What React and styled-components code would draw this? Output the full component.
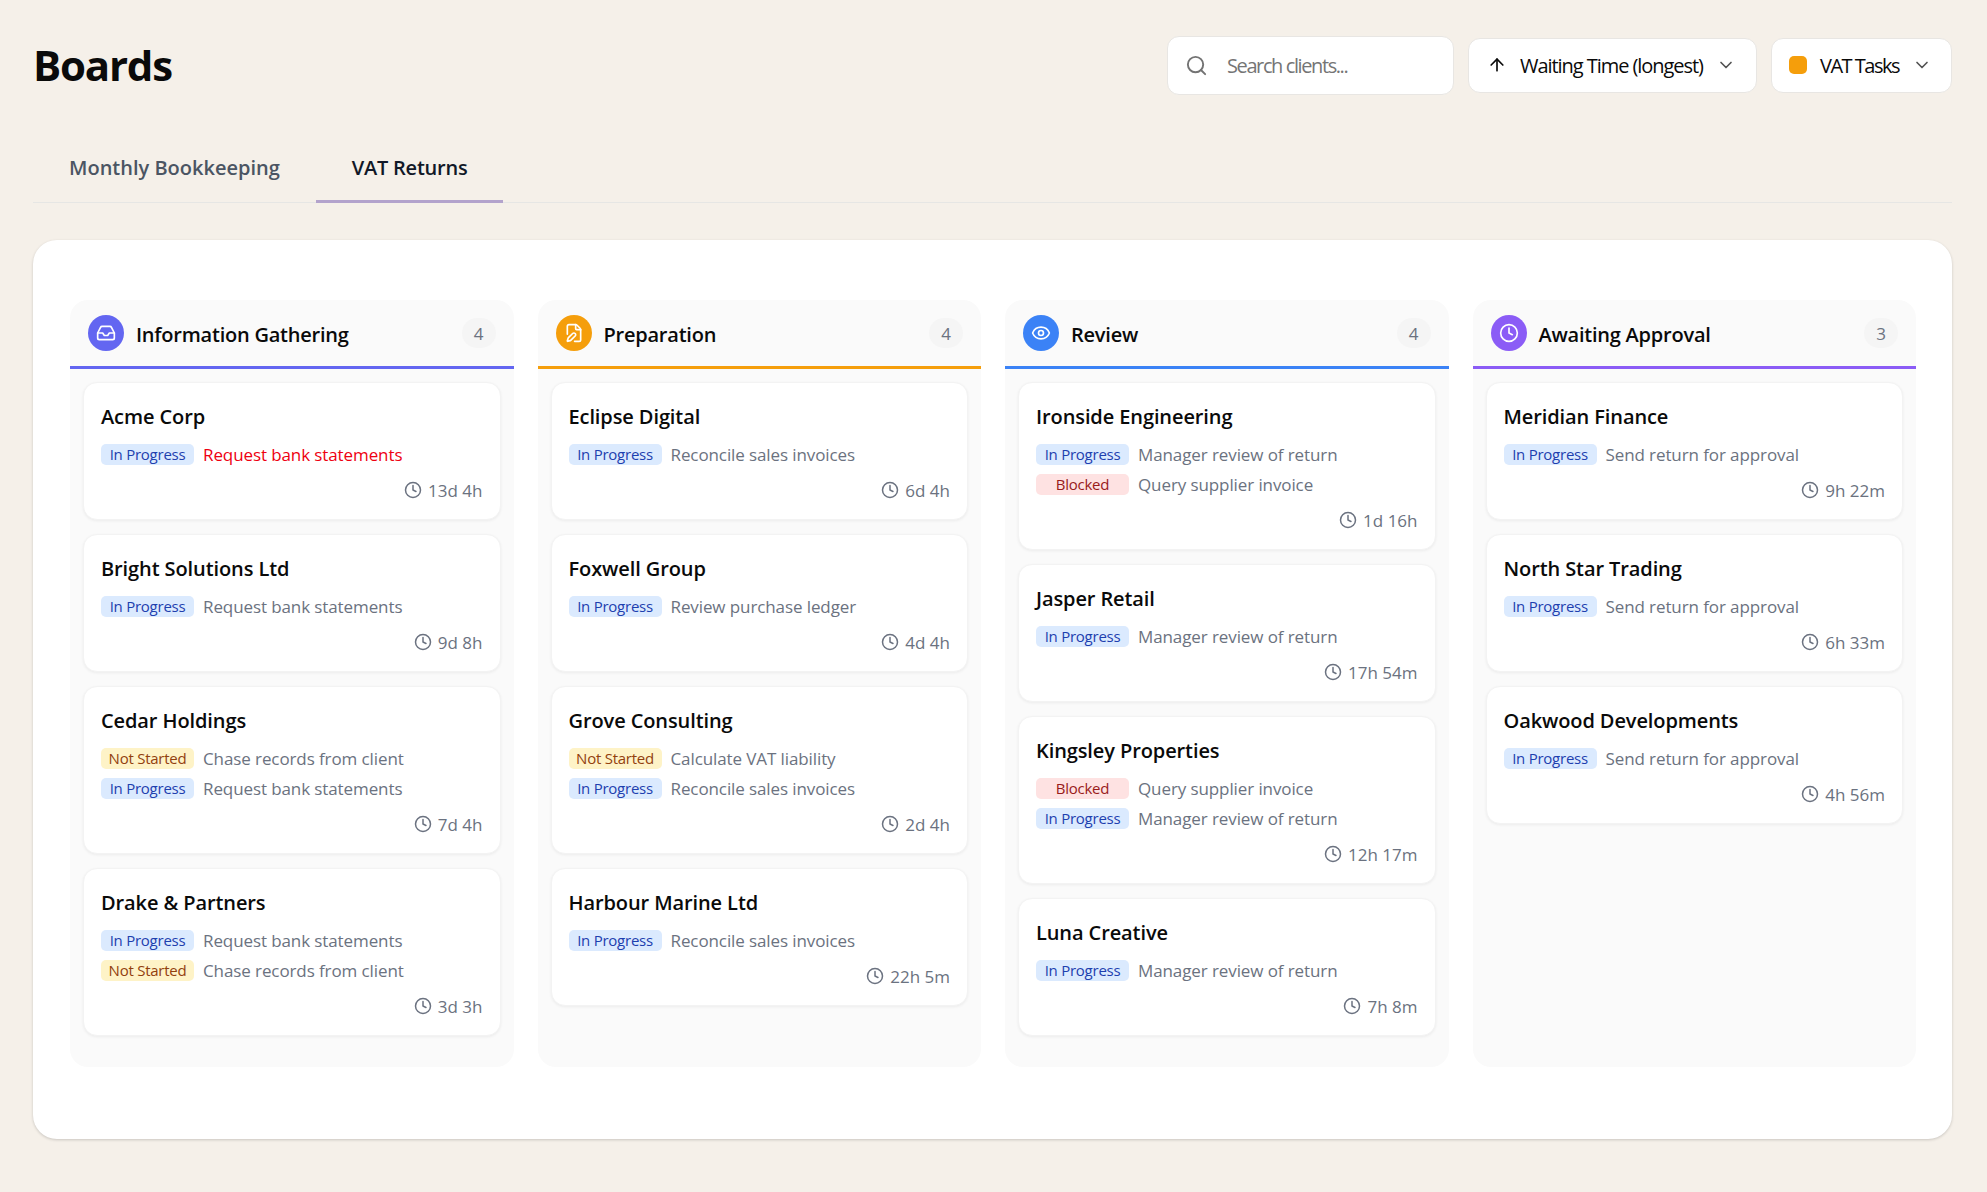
import React from 'react';
import styled, { createGlobalStyle } from 'styled-components';
import { Search, ArrowUp, ChevronDown, Inbox, FilePen, Eye, Clock } from 'lucide-react';

const Global = createGlobalStyle`
  * { box-sizing: border-box; }
  html, body { margin: 0; padding: 0; }
  body { background: #f5f0e9; font-family: "Open Sans", "Noto Sans", sans-serif; color: #0a0a0a; min-height: 1192px; }
`;

const Page = styled.div`
  padding: 35px 35px 53px 33px;
`;
const TopBar = styled.header`
  display: flex;
  align-items: center;
  justify-content: space-between;
  height: 60px;
  margin-bottom: 40px;
`;
const Title = styled.h1`
  margin: 0;
  font-size: 42px;
  font-weight: 700;
  letter-spacing: -1.2px;
  line-height: 60px;
`;
const Controls = styled.div`
  display: flex;
  align-items: center;
  gap: 14px;
`;
const Field = styled.div`
  display: flex;
  align-items: center;
  background: #fff;
  border: 1px solid #e8e6e3;
  border-radius: 12px;
  height: ${p => p.$h}px;
  width: ${p => p.$w}px;
  padding-left: ${p => p.$pad}px;
  font-size: 20px;
`;
const Placeholder = styled.span`
  color: #757575;
  margin-left: 19px;
  padding-top: 1px;
  letter-spacing: -1.4px;
`;
const SelectText = styled.span`
  margin: 0 13px;
  padding-top: 1px;
  white-space: nowrap;
  letter-spacing: ${p => p.$spacing}px;
`;
const Swatch = styled.span`
  width: 18px;
  height: 18px;
  border-radius: 5px;
  background: #f59e0b;
  flex: none;
`;
const Tabs = styled.nav`
  display: flex;
  height: 68px;
  border-bottom: 1px solid #e6e6e4;
  margin-bottom: 37px;
`;
const Tab = styled.div`
  display: flex;
  align-items: center;
  justify-content: center;
  padding: 0 36px;
  height: 68px;
  font-size: 20px;
  font-weight: 550;
  letter-spacing: ${p => (p.$active ? '-0.23px' : '0')};
  color: ${p => (p.$active ? '#111827' : '#4b5563')};
  border-bottom: 3px solid ${p => (p.$active ? '#b3a3cc' : 'transparent')};
`;
const Panel = styled.main`
  background: #fff;
  border-radius: 24px;
  padding: 60px 36px 72px 37px;
  box-shadow: 0 1px 3px rgba(0,0,0,0.18);
`;
const Board = styled.div`
  display: grid;
  grid-template-columns: repeat(4, 1fr);
  gap: 24px;
  align-items: stretch;
`;
const Column = styled.section`
  background: #fafafa;
  border-radius: 18px;
  padding-bottom: 31px;
`;
const ColumnHead = styled.div`
  display: flex;
  align-items: center;
  height: 69px;
  padding: 0 18px;
  border-bottom: 3px solid ${p => p.$color};
  gap: 12px;
`;
const IconBadge = styled.span`
  width: 36px;
  height: 36px;
  border-radius: 50%;
  background: ${p => p.$color};
  color: #fff;
  display: flex;
  align-items: center;
  justify-content: center;
  flex: none;
`;
const ColumnName = styled.h2`
  margin: 0;
  padding-top: 2px;
  font-size: 20px;
  font-weight: 600;
  letter-spacing: -0.23px;
  flex: 1;
`;
const Count = styled.span`
  min-width: 34px;
  height: 30px;
  border-radius: 15px;
  background: #f5f5f5;
  color: #6b7280;
  font-size: 17px;
  display: flex;
  align-items: center;
  justify-content: center;
`;
const CardList = styled.div`
  display: flex;
  flex-direction: column;
  gap: 14px;
  padding: 13px 13px 0;
`;
const Card = styled.article`
  background: #fff;
  border: 1px solid #f3f3f3;
  border-radius: 14px;
  padding: 17px 17px 14px;
  box-shadow: 0 1px 3px rgba(0,0,0,0.06);
`;
const CardName = styled.h3`
  margin: 0 0 6px;
  font-size: 20px;
  font-weight: 600;
  letter-spacing: -0.1px;
  line-height: 33px;
`;
const TaskRow = styled.div`
  display: flex;
  align-items: center;
  gap: 9px;
  height: 30px;
`;
const Status = styled.span`
  width: 93px;
  height: 21px;
  border-radius: 5px;
  font-size: 15px;
  font-weight: 500;
  letter-spacing: -0.25px;
  display: flex;
  align-items: center;
  justify-content: center;
  background: ${p => p.$bg};
  color: ${p => p.$fg};
`;
const TaskText = styled.span`
  font-size: 17px;
  letter-spacing: -0.1px;
  color: ${p => (p.$alert ? '#ee0011' : '#6b7280')};
`;
const Wait = styled.div`
  display: flex;
  align-items: center;
  justify-content: flex-end;
  gap: 6px;
  height: 30px;
  margin-top: 6px;
  font-size: 17px;
  color: #6b7280;
`;

const STATUS = {
  p: ['In Progress', '#dbeafe', '#1e40af'],
  n: ['Not Started', '#fef3c7', '#92400e'],
  b: ['Blocked', '#fee2e2', '#991b1b'],
};

const COLUMNS = [
  { name: 'Information Gathering', color: '#6366f1', Icon: Inbox, cards: [
    { name: 'Acme Corp', time: '13d 4h', tasks: [['p', 'Request bank statements', true]] },
    { name: 'Bright Solutions Ltd', time: '9d 8h', tasks: [['p', 'Request bank statements']] },
    { name: 'Cedar Holdings', time: '7d 4h', tasks: [['n', 'Chase records from client'], ['p', 'Request bank statements']] },
    { name: 'Drake & Partners', time: '3d 3h', tasks: [['p', 'Request bank statements'], ['n', 'Chase records from client']] },
  ] },
  { name: 'Preparation', color: '#f59e0b', Icon: FilePen, cards: [
    { name: 'Eclipse Digital', time: '6d 4h', tasks: [['p', 'Reconcile sales invoices']] },
    { name: 'Foxwell Group', time: '4d 4h', tasks: [['p', 'Review purchase ledger']] },
    { name: 'Grove Consulting', time: '2d 4h', tasks: [['n', 'Calculate VAT liability'], ['p', 'Reconcile sales invoices']] },
    { name: 'Harbour Marine Ltd', time: '22h 5m', tasks: [['p', 'Reconcile sales invoices']] },
  ] },
  { name: 'Review', color: '#3b82f6', Icon: Eye, cards: [
    { name: 'Ironside Engineering', time: '1d 16h', tasks: [['p', 'Manager review of return'], ['b', 'Query supplier invoice']] },
    { name: 'Jasper Retail', time: '17h 54m', tasks: [['p', 'Manager review of return']] },
    { name: 'Kingsley Properties', time: '12h 17m', tasks: [['b', 'Query supplier invoice'], ['p', 'Manager review of return']] },
    { name: 'Luna Creative', time: '7h 8m', tasks: [['p', 'Manager review of return']] },
  ] },
  { name: 'Awaiting Approval', color: '#8b5cf6', Icon: Clock, cards: [
    { name: 'Meridian Finance', time: '9h 22m', tasks: [['p', 'Send return for approval']] },
    { name: 'North Star Trading', time: '6h 33m', tasks: [['p', 'Send return for approval']] },
    { name: 'Oakwood Developments', time: '4h 56m', tasks: [['p', 'Send return for approval']] },
  ] },
];

export default function App() {
  return (
    <Page>
      <Global />
      <TopBar>
        <Title>Boards</Title>
        <Controls>
          <Field $w={287} $h={59} $pad={17}>
            <Search size={23} color="#737373" strokeWidth={2} />
            <Placeholder>Search clients...</Placeholder>
          </Field>
          <Field $w={289} $h={55} $pad={18}>
            <ArrowUp size={20} color="#0a0a0a" />
            <SelectText $spacing={-1.05}>Waiting Time (longest)</SelectText>
            <ChevronDown size={20} color="#525252" />
          </Field>
          <Field $w={181} $h={55} $pad={17}>
            <Swatch />
            <SelectText $spacing={-1.5}>VAT Tasks</SelectText>
            <ChevronDown size={20} color="#525252" />
          </Field>
        </Controls>
      </TopBar>
      <Tabs>
        <Tab>Monthly Bookkeeping</Tab>
        <Tab $active>VAT Returns</Tab>
      </Tabs>
      <Panel>
        <Board>
          {COLUMNS.map(col => (
            <Column key={col.name}>
              <ColumnHead $color={col.color}>
                <IconBadge $color={col.color}><col.Icon size={20} /></IconBadge>
                <ColumnName>{col.name}</ColumnName>
                <Count>{col.cards.length}</Count>
              </ColumnHead>
              <CardList>
                {col.cards.map(card => (
                  <Card key={card.name}>
                    <CardName>{card.name}</CardName>
                    {card.tasks.map(([s, text, alert]) => (
                      <TaskRow key={text}>
                        <Status $bg={STATUS[s][1]} $fg={STATUS[s][2]}>{STATUS[s][0]}</Status>
                        <TaskText $alert={alert}>{text}</TaskText>
                      </TaskRow>
                    ))}
                    <Wait><Clock size={18} />{card.time}</Wait>
                  </Card>
                ))}
              </CardList>
            </Column>
          ))}
        </Board>
      </Panel>
    </Page>
  );
}
